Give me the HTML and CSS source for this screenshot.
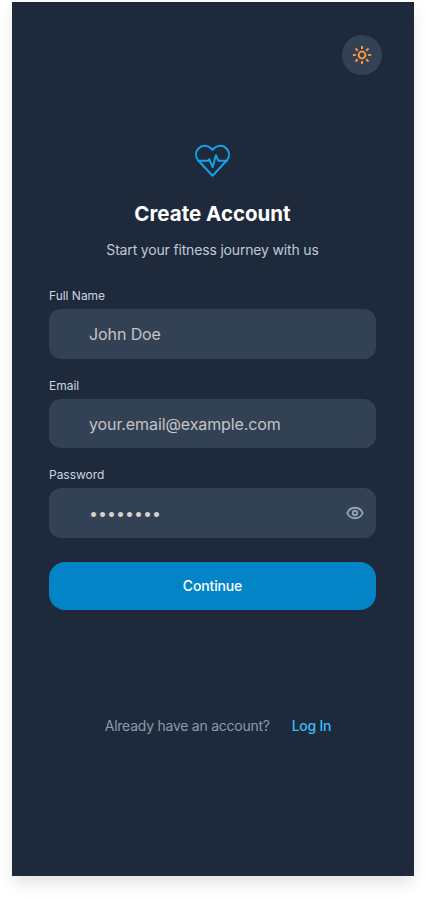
FILE: index.html
```html
<!DOCTYPE html>
<html lang="en">
<head>
<meta charset="utf-8">
<title>Create Account</title>
<link rel="stylesheet" href="styles.css">
</head>
<body>
<main class="screen">
  <div class="topbar">
    <button class="theme" type="button" aria-label="Toggle theme">
      <svg width="20" height="20" viewBox="0 0 20 20" fill="none" stroke="#fb923c" stroke-width="2">
        <circle cx="10" cy="10" r="3.4"/>
        <path d="M10 .9v3M10 16.1v3M.9 10h3M16.1 10h3M3.5 3.5l2.3 2.3M14.2 14.2l2.3 2.3M16.5 3.5l-2.3 2.3M5.8 14.2l-2.3 2.3"/>
      </svg>
    </button>
  </div>
  <svg class="logo" width="38" height="34" viewBox="0 0 38 34" fill="none" stroke="#0ea5e9" stroke-width="2" stroke-linejoin="round">
    <path d="M18.5 5.9C15 .9 8.2.7 4.5 4.5 1.1 8.1 1.1 13 4.5 16.8L18.5 31.7 32.5 16.8C35.9 13 35.9 8.1 32.5 4.5 28.8.7 22 .9 18.5 5.9Z"/>
    <path d="M3.5 16.8H14.2l1-1.6 3.4 8 3.3-12 2.5 5.6h9.5"/>
  </svg>
  <h1 class="title">Create Account</h1>
  <p class="subtitle">Start your fitness journey with us</p>
  <form class="form">
    <label class="label" for="name">Full Name</label>
    <div class="field"><input class="input" id="name" type="text" placeholder="John Doe"></div>
    <label class="label" for="email">Email</label>
    <div class="field"><input class="input" id="email" type="email" placeholder="your.email@example.com"></div>
    <label class="label" for="password">Password</label>
    <div class="field">
      <input class="input input-password" id="password" type="text" placeholder="••••••••">
      <svg class="eye" width="20" height="16" viewBox="0 0 20 16" fill="none" stroke="#94a3b8" stroke-width="1.9">
        <path d="M2.3 8C3.7 4.7 6.5 2.8 10 2.8S16.3 4.7 17.7 8C16.3 11.3 13.5 13.2 10 13.2S3.7 11.3 2.3 8Z" stroke-linejoin="round"/>
        <circle cx="10" cy="8" r="2.2"/>
      </svg>
    </div>
    <button class="continue" type="button">Continue</button>
  </form>
  <div class="footer"><span>Already have an account?</span><a class="login">Log In</a></div>
</main>
</body>
</html>
```
FILE: styles.css
```css
* { box-sizing: border-box; }
body {
  margin: 0;
  height: 898px;
  padding: 2px 12px 0;
  background: #fff;
  font-family: Inter, sans-serif;
  overflow: hidden;
}
.screen {
  width: 402px;
  height: 874px;
  padding: 33px 38px 0 37px;
  background: #1e293b;
  box-shadow: 0 8px 16px -2px rgba(0, 0, 0, .13);
  display: flex;
  flex-direction: column;
}
.topbar { display: flex; justify-content: flex-end; margin-right: -6px; }
.theme {
  width: 40px;
  height: 40px;
  padding: 0;
  border: 0;
  border-radius: 50%;
  background: #334155;
  display: flex;
  align-items: center;
  justify-content: center;
}
.logo { margin-top: 69px; align-self: center; }
.title {
  margin: 21px 0 0;
  font-size: 20.5px;
  line-height: 29px;
  font-weight: 700;
  color: #fff;
  text-align: center;
}
.subtitle {
  margin: 12px 0 0;
  font-size: 14px;
  letter-spacing: -.17px;
  line-height: 20px;
  color: #bfcad8;
  text-align: center;
}
.form { margin-top: 28px; display: flex; flex-direction: column; }
.label {
  font-size: 12px;
  line-height: 16px;
  letter-spacing: -.02px;
  color: #cbd5e1;
}
.field {
  height: 49.6px;
  margin: 5px 0 19px;
  padding: 0 11px 0 40px;
  border-radius: 12px;
  background: #334155;
  display: flex;
  align-items: center;
}
.input {
  flex: 1;
  min-width: 0;
  padding: 1.4px 0 0;
  border: 0;
  outline: 0;
  background: none;
  font: 400 16px/24px Inter, sans-serif;
  letter-spacing: -.1px;
  color: #fff;
}
.input-password { padding-top: 0; letter-spacing: 0; }
.input::placeholder { color: #c4c4c4; opacity: 1; }
.input-password::placeholder { color: #d4d0d0; }
.continue {
  height: 48px;
  margin-top: 5px;
  padding: 1px 0 0;
  border: 0;
  border-radius: 16px;
  background: #0284c7;
  font: 500 14px/20px Inter, sans-serif;
  letter-spacing: -.14px;
  color: #fff;
}
.footer {
  margin-top: 106px;
  padding-left: 11px;
  display: flex;
  justify-content: center;
  gap: 22px;
  font-size: 14px;
  letter-spacing: -.25px;
  line-height: 20px;
  color: #8a99ae;
}
.login { font-weight: 500; color: #38bdf8; }
```
